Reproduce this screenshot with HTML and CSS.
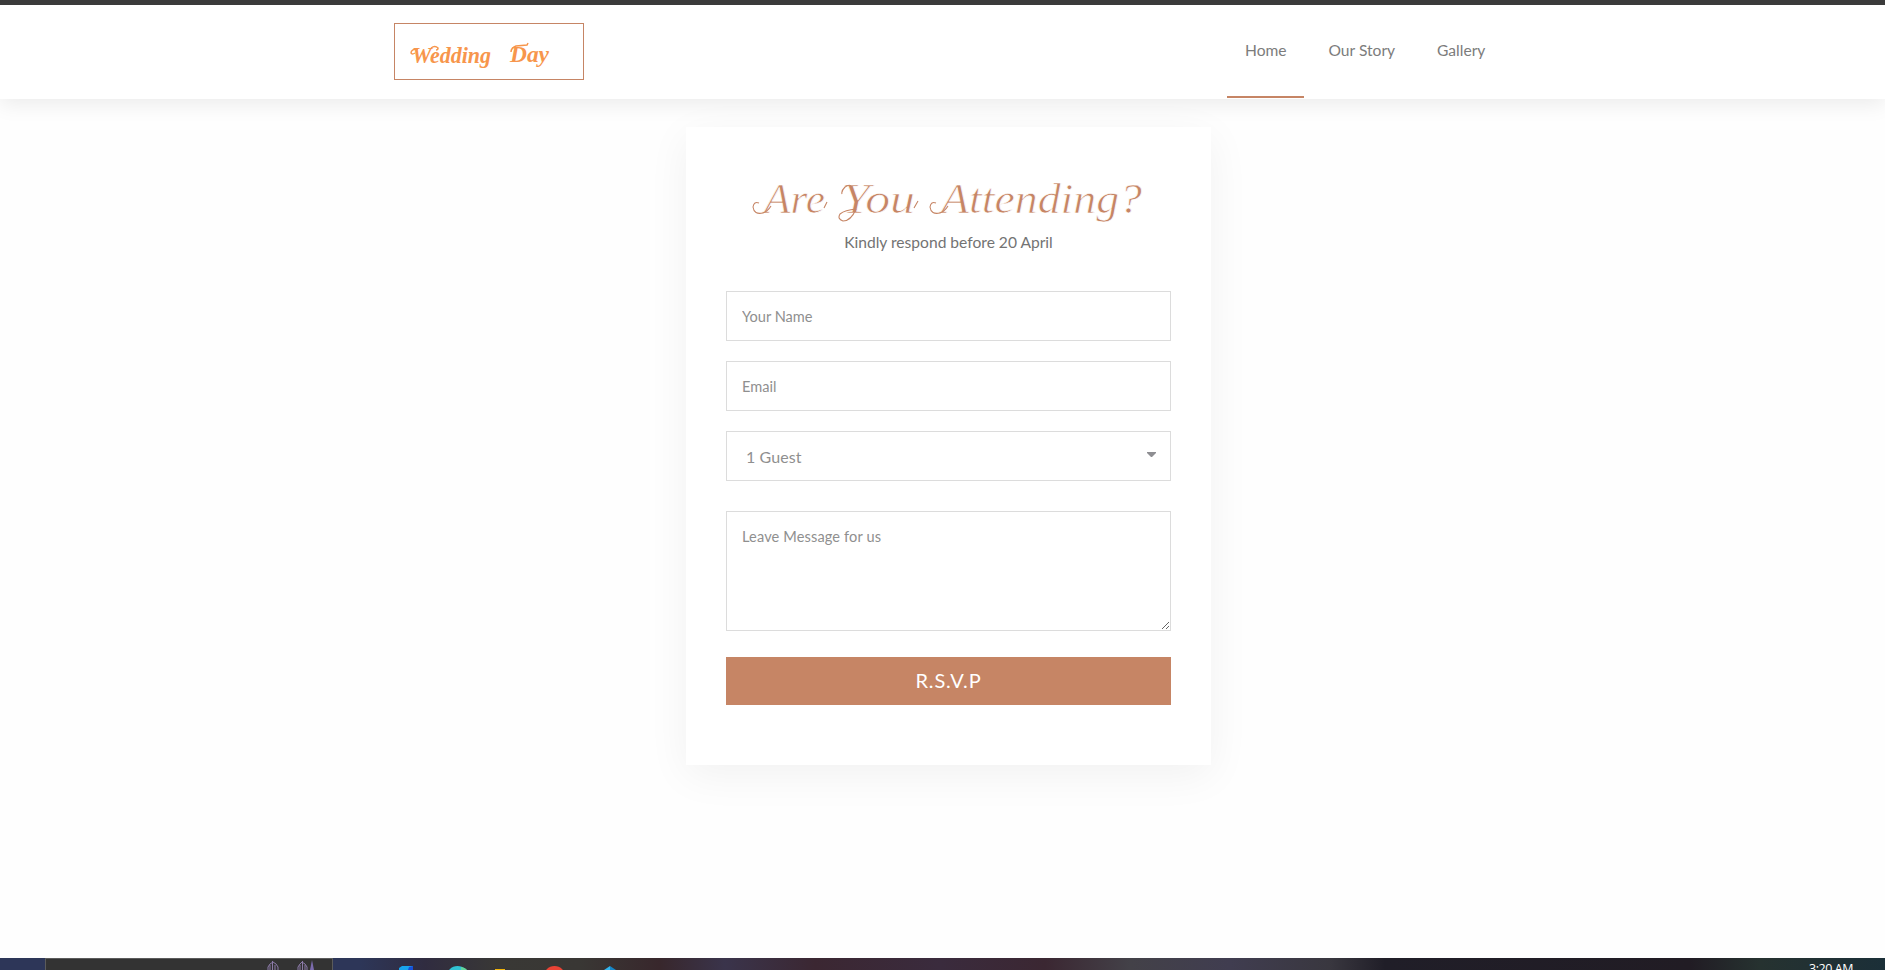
FILE: index.html
```html
<!DOCTYPE html>
<html lang="en">
<head>
<meta charset="utf-8">
<title>Wedding Day</title>
<link rel="stylesheet" href="styles.css">
</head>
<body>
<div class="page">
  <header class="header">
    <a class="logo">
      <svg width="188" height="55" viewBox="395 24 188 55">
        <text class="logo-text" x="412" y="63" textLength="79" lengthAdjust="spacingAndGlyphs">Wedding</text>
        <text class="logo-text" x="510" y="62" textLength="39" lengthAdjust="spacingAndGlyphs">Day</text>
        <path class="logo-swash" d="M418 49q-7 0-7 4 1 2 4 0M431 48q4-3 7 0 0 2-2 2M511 52q0-4 5-6l11-1 1-2"/>
      </svg>
    </a>
    <nav class="nav">
      <a class="nav-item active"><span class="home">Home</span></a>
      <a class="nav-item"><span class="story">Our Story</span></a>
      <a class="nav-item"><span class="gallery">Gallery</span></a>
    </nav>
  </header>
  <main class="main">
    <form class="card">
      <h2 class="title">
        <svg width="445" height="60" viewBox="726 170 445 60">
          <text class="title-text" x="764" y="213" textLength="61" lengthAdjust="spacingAndGlyphs">Are</text>
          <text class="title-text" x="842" y="213" textLength="73" lengthAdjust="spacingAndGlyphs">You</text>
          <text class="title-text" x="941" y="213" textLength="201" lengthAdjust="spacingAndGlyphs">Attending?</text>
          <path class="title-swash" d="M759 203q-5-2-6 4 1 8 10 6 5-2 8-7M842 194q-1-3 3-7 4-3 6-1M856 209q-5 12-13 12-6-2-3-7 5-4 16-5M936 203q-5-2-6 4 1 8 10 6 5-2 8-7M824 208l3-6M914 208l4-7"/>
        </svg>
      </h2>
      <p class="subtitle">Kindly respond before 20 April</p>
      <input class="field" type="text" placeholder="Your Name">
      <input class="field" type="text" placeholder="Email">
      <div class="field select"><span>1 Guest</span><svg width="9" height="5" viewBox="0 0 9 5"><path d="M0 0h9v1L5 5H4L0 1z"/></svg></div>
      <textarea class="field message" placeholder="Leave Message for us"></textarea>
      <button class="submit" type="button">R.S.V.P</button>
    </form>
  </main>
  <footer class="taskbar">
    <div class="search">
      <svg width="50" height="11" viewBox="265 959 50 11">
        <path class="crown" d="M268 970v-3l2-3 3-2 3 2 2 3v3M272.500 961v9M270 965v5M275 965v5M298 970v-3l2-3 2-2 3 2 2 3v3M302.500 961v9M300 965v5M305 965v5"/>
        <path class="spire" d="M310 970l2-10 2 10z"/>
      </svg>
    </div>
    <svg class="apps" width="230" height="12" viewBox="395 958 230 12">
      <path fill="#18a4ed" d="M399 970v-2l3-2h11l-2 4z"/><path fill="#174fd8" d="M409 967l4-1v4h-5z"/>
      <circle cx="457.500" cy="977" r="11" fill="#31c3d3"/><path fill="#63d59a" d="M461 967q5 1 6 3h-6z"/>
      <path fill="#f2b50b" d="M495 969h10v1h-10z"/>
      <circle cx="554.500" cy="977" r="11" fill="#ea4335"/>
      <path fill="#32b5ef" d="M604 970l6-4v4z"/><path fill="#1686c7" d="M610 966l6 4h-6z"/>
    </svg>
    <span class="clock">3:20 AM</span>
  </footer>
</div>
</body>
</html>
```
FILE: styles.css
```css
* { box-sizing: border-box; }
body { margin: 0; font-family: Lato, sans-serif; background: #fefefe; color: #7c7c7c; overflow: hidden; }
.page { height: 970px; display: flex; flex-direction: column; overflow: hidden; }
.header { height: 99px; border-top: 5px solid #3b3b3b; padding: 0 381px 0 394px; display: flex; justify-content: space-between; background: #fff; box-shadow: 0 5px 20px rgba(0,0,0,.08); flex: none; }
.logo { width: 190px; height: 57px; margin-top: 18px; border: 1px solid #c68565; }
.logo svg, .title svg { display: block; }
.logo-text { font: italic bold 23px "Liberation Serif", serif; fill: #f7964c; }
.logo-swash { fill: none; stroke: #f7964c; stroke-width: 1.500; }
.nav { display: flex; gap: 6.500px; }
.nav-item { height: 93px; padding: 34px 18px 0; font-size: 15.600px; line-height: 22px; white-space: nowrap; }
.nav-item.active { border-bottom: 2px solid #c68565; }
.home, .story, .gallery { display: block; }
.home { width: 41px; }
.story { width: 66px; }
.gallery { width: 49px; }
.main { flex: 1; padding: 28px 674px 0 686px; }
.card { height: 638px; padding: 43px 40px 0; display: flex; flex-direction: column; background: #fff; box-shadow: 0 10px 40px rgba(0,0,0,.055); }
.title { height: 60px; margin: 0; flex: none; }
.title-text { font: italic 42px "Liberation Serif", serif; fill: #c68565; stroke: #fff; stroke-width: .7px; }
.title-swash { fill: none; stroke: #c68565; stroke-width: 1.100; }
.subtitle { margin: 2px 0 38px; height: 21px; font-size: 15.600px; line-height: 21px; text-align: center; color: #737373; }
.field { display: block; width: 445px; height: 50px; margin: 0 0 20px; padding: 0 15px; border: 1px solid #dcdcdc; border-radius: 0; background: #fff; color: #8f8f8f; font: 14.600px Lato, sans-serif; outline: none; flex: none; }
.field::placeholder { color: #8f8f8f; opacity: 1; }
.select { display: flex; align-items: center; justify-content: space-between; padding: 1px 14px 0 19px; font-size: 16px; letter-spacing: .1px; margin-bottom: 30px; }
.select svg { margin-top: -4px; fill: #8e8e92; }
.message { height: 120px; padding-top: 16px; margin-bottom: 26px; resize: vertical; letter-spacing: .12px; }
.submit { height: 48px; width: 445px; border: 0; background: #c68565; color: #fff; font: 20px Lato, sans-serif; letter-spacing: .85px; padding: 0 0 2px; flex: none; }
.taskbar { height: 12px; flex: none; display: flex; overflow: hidden; background: linear-gradient(90deg,#2d3658 0,#2d3658 360px,#302c40 425px,#393835 500px,#393734 580px,#38272c 660px,#3a344b 725px,#3b2732 815px,#3a2b3d 940px,#3b2732 1045px,#434148 1130px,#403d50 1230px,#39373f 1330px,#201e28 1385px,#211c24 1690px,#263230 1760px,#1b2f38 1885px); }
.search { width: 288px; height: 12px; margin-left: 45px; background: #333; border: 1px solid #5b5b5b; border-bottom: 0; padding-left: 219px; }
.search svg { display: block; }
.crown { fill: none; stroke: #8c7ba9; stroke-width: 1; }
.spire { fill: #7b6bad; }
.apps { margin-left: 62px; flex: none; }
.clock { margin-left: auto; margin-right: 32px; margin-top: 3px; font: 12.500px/15px "Open Sans", sans-serif; letter-spacing: -.45px; color: #fff; white-space: nowrap; }
```
